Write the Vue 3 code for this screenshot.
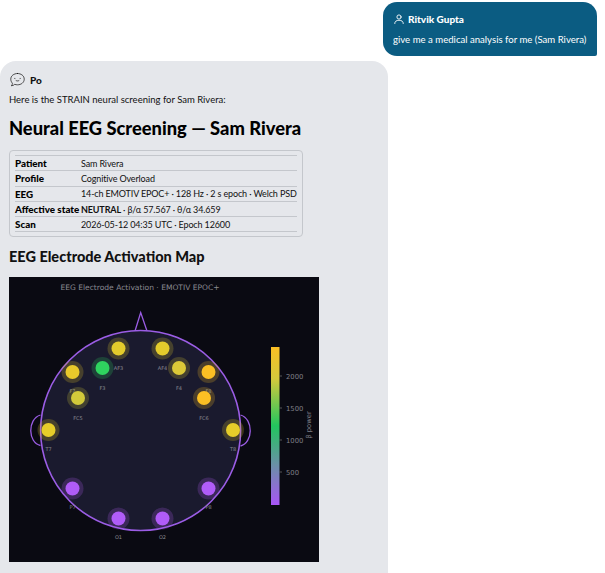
<template>
  <div class="chat">
    <div class="row-user">
      <div class="bubble-user">
        <div class="who">
          <svg class="user-icon" viewBox="0 0 24 24" fill="none" stroke="currentColor" stroke-width="1.800" stroke-linecap="round">
            <circle cx="12" cy="8" r="4.200" />
            <path d="M3.500 21c0-4 3-6.500 8.500-6.500s8.500 2.500 8.500 6.500" />
          </svg>
          <span>Ritvik Gupta</span>
        </div>
        <p class="user-text">give me a medical analysis for me (Sam Rivera)</p>
      </div>
    </div>

    <div class="bubble-bot">
      <div class="who who-bot">
        <svg class="bot-icon" viewBox="0 0 24 24" fill="none" stroke="#111" stroke-width="1" stroke-linecap="round">
          <path d="M12 3.500c5.200 0 9.500 3.300 9.500 8s-4.300 8-9.500 8c-1.400 0-2.700-.2-3.900-.7-1 1.200-2.600 1.900-4.800 2.100 1-1 1.500-2.200 1.500-3.600C3.300 15.400 2.500 13.600 2.500 11.500c0-4.700 4.300-8 9.500-8z" />
          <path d="M8 10.500h.4M15.600 10.500h.4M10 13.500c1.200.8 2.800.8 4 0" />
        </svg>
        <span>Po</span>
      </div>
      <p class="intro">Here is the STRAIN neural screening for Sam Rivera:</p>
      <h1>Neural EEG Screening — Sam Rivera</h1>

      <div class="table-wrap">
        <table>
          <tbody>
            <tr v-for="r in rows" :key="r.label">
              <th>{{ r.label }}</th>
              <td><strong v-if="r.strong">{{ r.strong }}</strong>{{ r.value }}</td>
            </tr>
          </tbody>
        </table>
      </div>

      <h2>EEG Electrode Activation Map</h2>

      <svg class="plot" viewBox="0 0 310 285" width="310" height="285">
        <defs>
          <linearGradient id="bar" x1="0" y1="0" x2="0" y2="1">
            <stop offset="0" stop-color="#fbbf24" />
            <stop offset="0.2" stop-color="#d4c93c" />
            <stop offset="0.5" stop-color="#22c55e" />
            <stop offset="0.75" stop-color="#6b8fa8" />
            <stop offset="1" stop-color="#a855f7" />
          </linearGradient>
        </defs>
        <rect width="310" height="285" fill="#0a0a12" />
        <text x="131" y="13" text-anchor="middle" class="plot-title">EEG Electrode Activation · EMOTIV EPOC+</text>

        <path d="M126 54 L131.700 35.500 L138 54" fill="none" stroke="#9b5de5" stroke-width="1.300" />
        <path d="M31.500 138 C18 142 19 166 31.500 168.500" fill="none" stroke="#9b5de5" stroke-width="1.300" />
        <path d="M231.500 138 C245 142 244 166 231.500 169" fill="none" stroke="#9b5de5" stroke-width="1.300" />
        <circle cx="131.600" cy="153.500" r="100" fill="#1a1a2e" stroke="#9b5de5" stroke-width="1.600" />

        <g v-for="e in electrodes" :key="e.name">
          <circle :cx="e.x" :cy="e.y" r="11" :fill="e.color" fill-opacity="0.22" />
          <circle :cx="e.x" :cy="e.y" r="7" :fill="e.color" />
          <text :x="e.x" :y="e.ly" text-anchor="middle" class="el-label">{{ e.name }}</text>
        </g>

        <rect x="262" y="70" width="8.500" height="158" fill="url(#bar)" />
        <g v-for="t in ticks" :key="t.label">
          <line x1="270.500" x2="273" :y1="t.y" :y2="t.y" stroke="#777" stroke-width="0.700" />
          <text x="277" :y="t.y + 2.500" class="tick">{{ t.label }}</text>
        </g>
        <text class="tick" transform="translate(302 148) rotate(-90)" text-anchor="middle">β power</text>
      </svg>
    </div>
  </div>
</template>

<script setup>
const rows = [
  { label: 'Patient', value: 'Sam Rivera' },
  { label: 'Profile', value: 'Cognitive Overload' },
  { label: 'EEG', value: '14-ch EMOTIV EPOC+ · 128 Hz · 2 s epoch · Welch PSD' },
  { label: 'Affective state', strong: 'NEUTRAL', value: ' · β/α 57.567 · θ/α 34.659' },
  { label: 'Scan', value: '2026-05-12 04:35 UTC · Epoch 12600' },
];

const purple = '#b05cf8';

// positions relative to the plot's top left corner
const electrodes = [
  { name: 'AF3', x: 109.500, y: 71.500, ly: 93, color: '#e3cb2c' },
  { name: 'AF4', x: 153.500, y: 71.500, ly: 93, color: '#e3cb2c' },
  { name: 'F3', x: 93.500, y: 91, ly: 113, color: '#2fd35f' },
  { name: 'F4', x: 170, y: 91, ly: 113, color: '#dcc938' },
  { name: 'F7', x: 63.500, y: 95, ly: 116, color: '#e8c92b' },
  { name: 'F8', x: 199.500, y: 95, ly: 116, color: '#fbbf24' },
  { name: 'FC5', x: 69, y: 121, ly: 143, color: '#d2c93a' },
  { name: 'FC6', x: 195, y: 121, ly: 143, color: '#fbbf24' },
  { name: 'T7', x: 39.500, y: 153, ly: 174, color: '#e6cd2a' },
  { name: 'T8', x: 224, y: 153, ly: 174, color: '#e6cd2a' },
  { name: 'P7', x: 63.500, y: 211.500, ly: 232, color: purple },
  { name: 'P8', x: 199.500, y: 211.500, ly: 232, color: purple },
  { name: 'O1', x: 109.500, y: 241.500, ly: 262, color: purple },
  { name: 'O2', x: 153.500, y: 241.500, ly: 262, color: purple },
];

const ticks = [
  { label: '2000', y: 99 },
  { label: '1500', y: 131 },
  { label: '1000', y: 163 },
  { label: '500', y: 195 },
];
</script>

<style scoped>
.chat {
  width: 605px;
  height: 573px;
  overflow: hidden;
  background: #fff;
  font-family: Lato, "Noto Sans", sans-serif;
  color: #111;
}

.row-user {
  display: flex;
  justify-content: flex-end;
  padding: 2px 8px 0 0;
}

.bubble-user {
  width: 214px;
  height: 54px;
  box-sizing: border-box;
  padding: 9px 10px;
  background: #0b5c82;
  color: #fff;
  border-radius: 14px 14px 2px 14px;
}

.who {
  display: flex;
  align-items: center;
  gap: 3px;
  font-size: 10px;
  font-weight: 900;
  line-height: 16px;
}

.user-icon {
  width: 12px;
  height: 12px;
  flex-shrink: 0;
}

.user-text {
  margin: 6px 0 0;
  font-size: 9.600px;
  line-height: 14px;
  white-space: nowrap;
}

.bubble-bot {
  width: 388px;
  margin-top: 5px;
  padding: 10px 9px 0;
  box-sizing: border-box;
  height: 520px;
  background: #e5e7eb;
  border-radius: 16px 16px 0 0;
}

.who-bot {
  gap: 4px;
  color: #111;
}

.bot-icon {
  width: 17px;
  height: 17px;
}

.intro {
  margin: 5px 0 0;
  font-size: 9.500px;
  line-height: 14px;
}

h1 {
  margin: 7px 0 0;
  font-size: 18.300px;
  line-height: 28px;
  font-weight: 900;
  color: #000;
  white-space: nowrap;
}

.table-wrap {
  width: 294px;
  margin-top: 8px;
  padding: 4px 5px;
  box-sizing: border-box;
  border: 1px solid #c4c7cc;
  border-radius: 4px;
}

table {
  width: 100%;
  table-layout: fixed;
  border-collapse: collapse;
  font-size: 9px;
  white-space: nowrap;
}

tr {
  height: 15.300px;
  border-top: 1px solid #c4c7cc;
  border-bottom: 1px solid #c4c7cc;
}

th {
  width: 66px;
  padding: 0;
  text-align: left;
  font-size: 9.800px;
  font-weight: 900;
  color: #000;
}

td {
  padding: 0;
  letter-spacing: -0.14px;
}

h2 {
  margin: 10px 0 0;
  font-size: 14.500px;
  line-height: 20px;
  font-weight: 900;
  color: #111;
  white-space: nowrap;
}

.plot {
  display: block;
  margin-top: 10px;
}

.plot-title {
  font-family: "DejaVu Sans", sans-serif;
  font-size: 7.550px;
  fill: #8a8a93;
}

.el-label {
  font-family: "DejaVu Sans", sans-serif;
  font-size: 5px;
  fill: #8a8a93;
}

.tick {
  font-family: "DejaVu Sans", sans-serif;
  font-size: 6.800px;
  fill: #808088;
}
</style>
